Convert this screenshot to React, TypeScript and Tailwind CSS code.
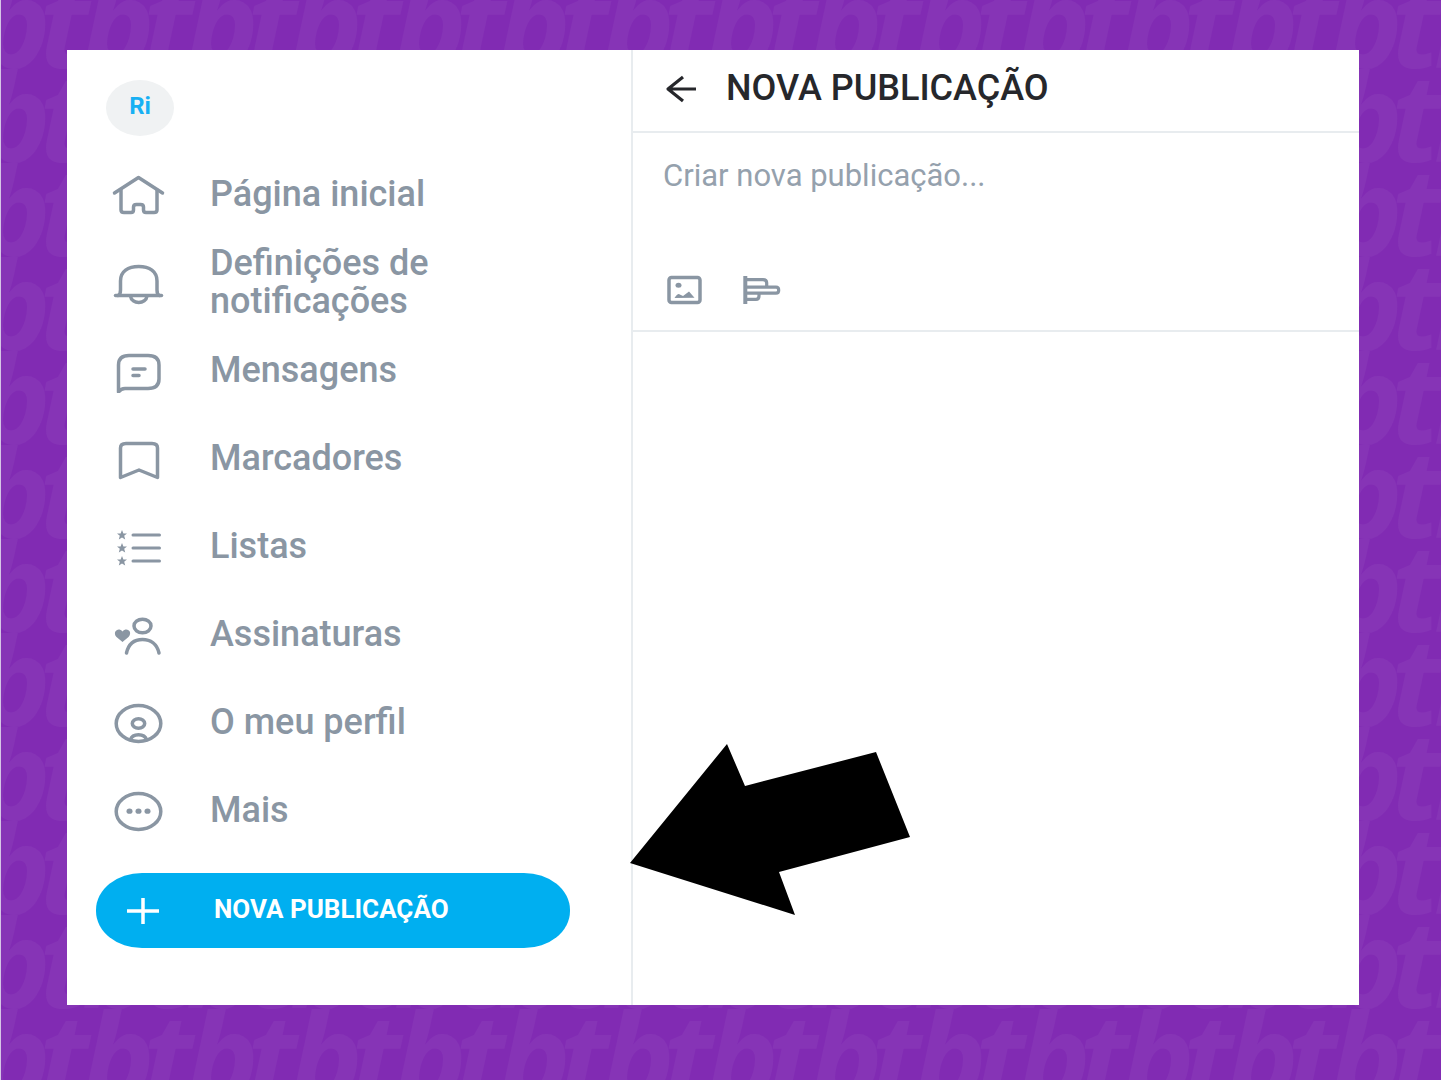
import type { ReactNode } from 'react';

interface NavItem {
  label: string;
  icon: ReactNode;
}

const STAR = 'M0 -5 L1.4 -1.6 L5 -1.4 L2.2 0.8 L3.2 4.4 L0 2.4 L-3.2 4.4 L-2.2 0.8 L-5 -1.4 L-1.4 -1.6 Z';

const navItems: NavItem[] = [
  {
    label: 'Página inicial',
    icon: (
      <>
        <path d="M3.5 20 L27.5 4.5 L51.5 20" />
        <path d="M10 17 V37 Q10 39.5 13 39.5 H20 Q22.5 39.5 22.5 37 V34 Q22.5 31.5 25.5 31.5 H29.5 Q32.5 31.5 32.5 34 V37 Q32.5 39.5 35 39.5 H43 Q46 39.5 46 37 V17" />
      </>
    ),
  },
  {
    label: 'Definições de notificações',
    icon: (
      <>
        <path d="M4.5 34.5 H50.5" />
        <path d="M7 34.5 Q9.5 33.5 9.5 29 V20 C9.5 10.5 17 5.5 27.75 5.5 C38.5 5.5 46 10.5 46 20 V29 Q46 33.5 48.5 34.5" />
        <path d="M19.5 35 C20.5 43.5 35 43.5 36 35" />
      </>
    ),
  },
  {
    label: 'Mensagens',
    icon: (
      <>
        <path d="M7.5 43 V16 Q7.5 6.5 18 6.5 H37 Q48 6.5 48 16 V30 Q48 39.5 37 39.5 H14 Q10 39.5 7.5 43 Z" />
        <path d="M22 20 H34 M22 26.5 H28" />
      </>
    ),
  },
  {
    label: 'Marcadores',
    icon: <path d="M9.5 40.5 V11 Q9.5 6.5 15 6.5 H41 Q46.5 6.5 46.5 11 V40.5 L28 33 Z" />,
  },
  {
    label: 'Listas',
    icon: (
      <>
        <path d="M22 10 H48.5 M22 23 H48.5 M22 36 H48.5" strokeWidth="3" />
        <g fill="currentColor" stroke="none">
          <path d={STAR} transform="translate(11 10)" />
          <path d={STAR} transform="translate(11 23)" />
          <path d={STAR} transform="translate(11 36)" />
        </g>
      </>
    ),
  },
  {
    label: 'Assinaturas',
    icon: (
      <>
        <ellipse cx="31.5" cy="13" rx="8.5" ry="6.8" />
        <path d="M15.5 40 C17.5 31 23.5 26.5 31.5 26.5 C39.5 26.5 46 31 48 40" />
        <path
          d="M11.5 29 L5.5 24 C2 20 5 16 8.5 16.5 Q10.5 16.8 11.5 18.5 Q12.5 16.8 14.5 16.5 C18.5 16 21 20 17.5 24 Z"
          fill="currentColor"
          stroke="none"
        />
      </>
    ),
  },
  {
    label: 'O meu perfil',
    icon: (
      <>
        <ellipse cx="27.5" cy="22.5" rx="22.3" ry="18" />
        <ellipse cx="27.5" cy="22.5" rx="6.2" ry="4.8" />
        <path d="M19.5 38.5 C21.5 32 33.5 32 35.5 38.5" />
      </>
    ),
  },
  {
    label: 'Mais',
    icon: (
      <>
        <ellipse cx="27.5" cy="22.5" rx="22.3" ry="18" />
        <g fill="currentColor" stroke="none">
          <ellipse cx="18.5" cy="22.2" rx="3" ry="2.6" />
          <ellipse cx="27.5" cy="22.2" rx="3" ry="2.6" />
          <ellipse cx="36.5" cy="22.2" rx="3" ry="2.6" />
        </g>
      </>
    ),
  },
];

function Watermark() {
  return (
    <svg className="absolute inset-0 h-full w-full" aria-hidden="true">
      <defs>
        <pattern id="tb" width="104" height="94" patternUnits="userSpaceOnUse">
          <g fill="#8634b6" fontSize="122" fontWeight="700" fontStyle="italic" fontFamily="'Open Sans', sans-serif">
            {[68, 162].map((y) =>
              [-104, 0, 104].map((x) => (
                <g key={`${x}-${y}`}>
                  <text x={x + 38} y={y}>t</text>
                  <text x={x + 81} y={y}>b</text>
                </g>
              )),
            )}
          </g>
        </pattern>
      </defs>
      <rect width="100%" height="100%" fill="url(#tb)" />
    </svg>
  );
}

function Sidebar() {
  return (
    <aside className="border-r-2 border-[#e8ecef] pt-[30px]">
      <div className="ml-[39px] flex h-14 w-[68px] items-center justify-center rounded-[50%] bg-[#f0f2f3] pb-1 text-[24px] font-bold text-[#18b0f3]">
        Ri
      </div>
      <nav className="mt-[15px]">
        {navItems.map((item) => (
          <a key={item.label} href="#" className="flex h-[88px] items-center pl-11">
            <svg
              className="h-11 w-14 shrink-0"
              viewBox="0 0 56 44"
              fill="none"
              stroke="currentColor"
              strokeWidth="3.5"
              strokeLinecap="round"
              strokeLinejoin="round"
            >
              {item.icon}
            </svg>
            <span className="ml-[43px] max-w-[260px] pb-[2px] text-[36px] leading-[38px] font-medium">{item.label}</span>
          </a>
        ))}
      </nav>
      <button
        type="button"
        className="mt-[18px] mr-[60px] ml-[29px] flex h-[75px] w-[calc(100%-90px)] items-center rounded-[46px_/_37px] bg-[#00aff0] pl-[31px] text-[26px] font-bold text-white"
      >
        <svg className="h-8 w-8" viewBox="0 0 32 32" stroke="currentColor" strokeWidth="3.5">
          <path d="M0 16 H32 M16 3 V29" />
        </svg>
        <span className="ml-[55px] pb-[2px]">NOVA PUBLICAÇÃO</span>
      </button>
    </aside>
  );
}

function Composer() {
  return (
    <main className="relative">
      <header className="flex h-[83px] items-center border-b-2 border-[#e8ecef] pb-[6px] pl-8 text-[#26272b]">
        <button type="button" aria-label="Voltar">
          <svg className="h-8 w-8" viewBox="0 0 32 32" fill="none" stroke="currentColor" strokeWidth="3.2" strokeLinejoin="round">
            <path d="M31 17 H3 M18 5 L3 17 L18 29" />
          </svg>
        </button>
        <h1 className="ml-[29px] text-[36px] leading-[38px] font-medium">NOVA PUBLICAÇÃO</h1>
      </header>
      <form className="border-b-2 border-[#e8ecef] pr-8 pb-[24px] pl-[30px]">
        <textarea
          aria-label="Criar nova publicação"
          placeholder="Criar nova publicação..."
          className="block h-[116px] w-full resize-none pt-6 text-[31px] leading-[38px] outline-none placeholder:text-[#95a1ad]"
        />
        <div className="mt-[25px] flex gap-9 pl-[2px]">
          <button type="button" aria-label="Adicionar imagem">
            <svg className="h-8 w-10" viewBox="0 0 40 32" fill="none" stroke="currentColor" strokeWidth="3.5">
              <rect x="4" y="3.5" width="31" height="25" rx="2.5" />
              <g fill="currentColor" stroke="none">
                <ellipse cx="13.5" cy="11.2" rx="3" ry="2.5" />
                <path d="M9.5 24 Q12 20 13.8 20 L18 22 L24 17.5 L29.5 23.8 Z" />
              </g>
            </svg>
          </button>
          <button type="button" aria-label="Adicionar sondagem">
            <svg className="h-8 w-10" viewBox="0 0 40 32" fill="none" stroke="currentColor" strokeWidth="3.2">
              <path d="M4.3 2 V30" strokeWidth="4" />
              <path d="M4 5.7 H22 Q25.7 5.7 25.7 9 V13 M4 13.2 H35 Q37.7 13.2 37.7 16.2 Q37.7 19.2 35 19.2 H4 M18 19.2 V22 Q18 25.4 15 25.4 H4" />
            </svg>
          </button>
        </div>
      </form>
      {/* Arrow pointing at the publish button */}
      <svg className="absolute top-[693px] -left-[3px] h-[173px] w-[280px]" viewBox="0 0 280 173" aria-hidden="true">
        <path d="M0 120 L97 1 L115 43 L246 9 L280 94 L149 129 L165 172 Z" />
      </svg>
    </main>
  );
}

export default function App() {
  return (
    <div className="relative flex min-h-screen border-l border-[#d5c5e6] bg-[#812bb3] pt-[50px] pr-[82px] pb-[75px] pl-[66px] font-['Roboto',sans-serif]">
      <Watermark />
      <div className="relative grid flex-1 grid-cols-[566fr_726fr] bg-white text-[#8a96a3]">
        <Sidebar />
        <Composer />
      </div>
    </div>
  );
}
